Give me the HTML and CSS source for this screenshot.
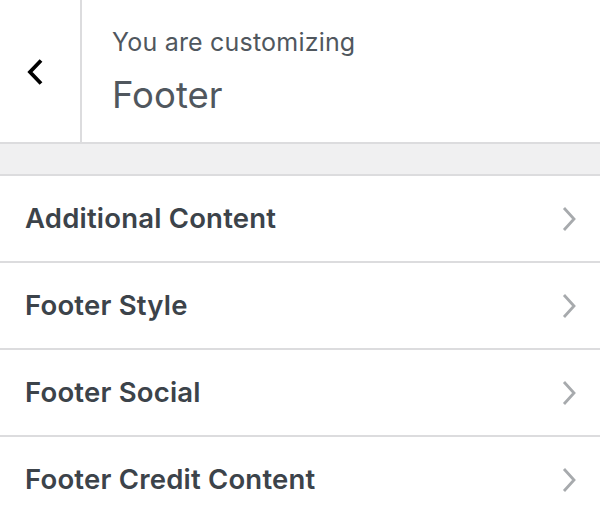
FILE: index.html
```html
<!DOCTYPE html>
<html>
<head>
<meta charset="utf-8">
<link rel="stylesheet" href="styles.css">
</head>
<body>
<div class="panel">
  <header class="head">
    <button class="back" aria-label="Back">
      <svg width="18" height="28" viewBox="0 0 18 28"><path d="M15 2.5 L4 14 L15 25.5" fill="none" stroke="#000" stroke-width="3.8"/></svg>
    </button>
    <div class="title">
      <div class="sub">You are customizing</div>
      <div class="name">Footer</div>
    </div>
  </header>
  <div class="band"></div>
  <ul class="list">
    <li class="item"><span>Additional Content</span><svg class="chev" width="16" height="26" viewBox="0 0 16 26"><path d="M3 2 L13 13 L3 24" fill="none" stroke="#a7aaad" stroke-width="2.8"/></svg></li>
    <li class="item"><span>Footer Style</span><svg class="chev" width="16" height="26" viewBox="0 0 16 26"><path d="M3 2 L13 13 L3 24" fill="none" stroke="#a7aaad" stroke-width="2.8"/></svg></li>
    <li class="item"><span>Footer Social</span><svg class="chev" width="16" height="26" viewBox="0 0 16 26"><path d="M3 2 L13 13 L3 24" fill="none" stroke="#a7aaad" stroke-width="2.8"/></svg></li>
    <li class="item"><span>Footer Credit Content</span><svg class="chev" width="16" height="26" viewBox="0 0 16 26"><path d="M3 2 L13 13 L3 24" fill="none" stroke="#a7aaad" stroke-width="2.8"/></svg></li>
  </ul>
</div>
</body>
</html>
```
FILE: styles.css
```css
html, body { margin: 0; padding: 0; background: #fff; }
body { font-family: Inter, "Liberation Sans", sans-serif; width: 600px; height: 520px; overflow: hidden; }
.panel { display: flex; flex-direction: column; }
.head { display: flex; height: 142px; border-bottom: 2px solid #dcdcde; }
.back { width: 82px; border: 0; border-right: 2px solid #dcdcde; background: #fff; padding: 0; display: flex; align-items: center; justify-content: center; }
.back svg { margin-right: 10px; margin-top: 2px; }
.title { padding-left: 30px; padding-top: 26px; color: #50575e; }
.sub { font-size: 25px; line-height: 32px; letter-spacing: 0.2px; }
.name { font-size: 36.5px; line-height: 44px; margin-top: 15px; color: #50575e; }
.band { height: 30px; background: #f0f0f1; border-bottom: 2px solid #dcdcde; }
.list { list-style: none; margin: 0; padding: 0; }
.item { border-bottom: 2px solid #dcdcde; display: flex; align-items: center; justify-content: space-between; padding: 0 23px 2px 25px; box-sizing: border-box; height: 87px; font-size: 27.5px; font-weight: 600; letter-spacing: 0.2px; color: #3c434a; }
.chev { flex: none; margin-top: 2px; }
```
